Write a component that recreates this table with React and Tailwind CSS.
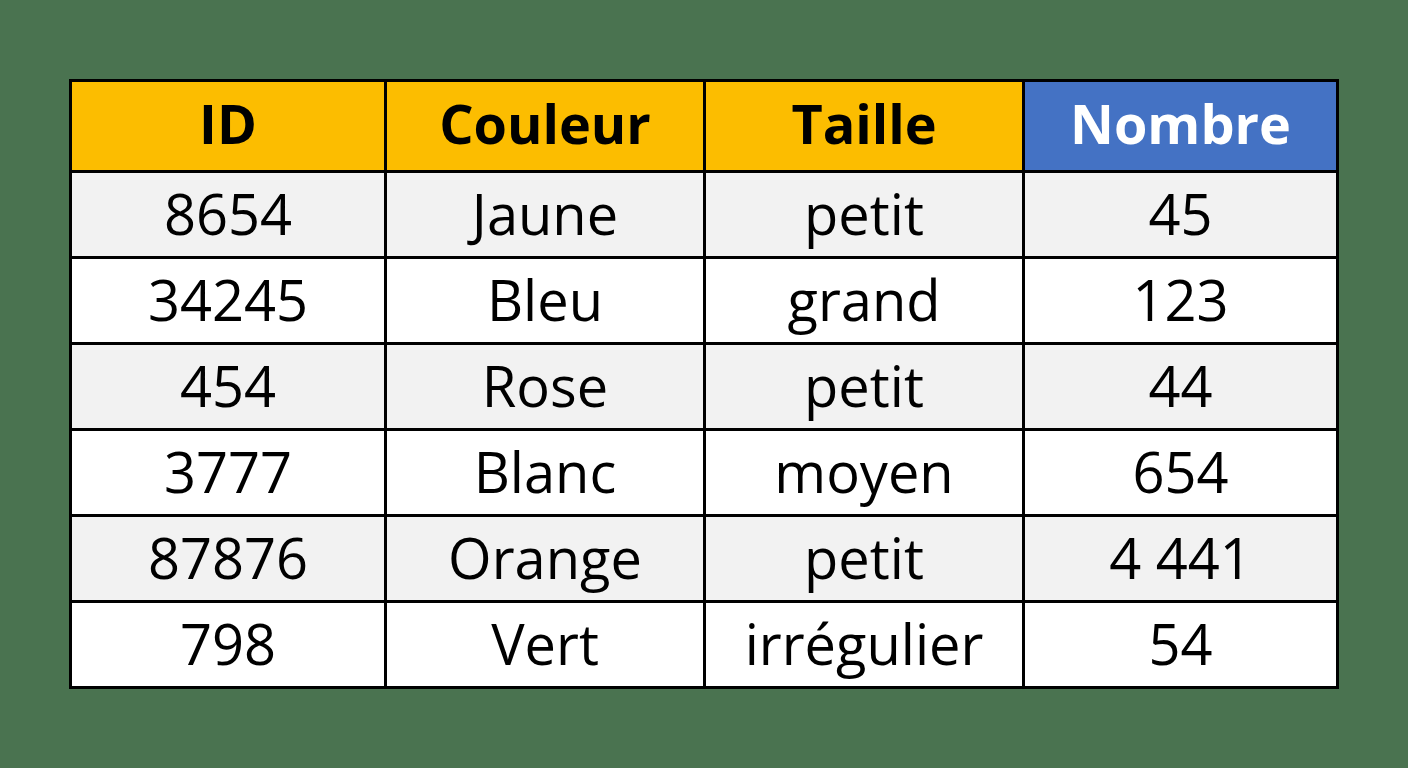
const headers = [
  { label: 'ID', bg: 'bg-[#fcbd00]', text: 'text-black' },
  { label: 'Couleur', bg: 'bg-[#fcbd00]', text: 'text-black' },
  { label: 'Taille', bg: 'bg-[#fcbd00]', text: 'text-black' },
  { label: 'Nombre', bg: 'bg-[#4472c4]', text: 'text-white' },
];

const rows = [
  ['8654', 'Jaune', 'petit', '45'],
  ['34245', 'Bleu', 'grand', '123'],
  ['454', 'Rose', 'petit', '44'],
  ['3777', 'Blanc', 'moyen', '654'],
  ['87876', 'Orange', 'petit', '4 441'],
  ['798', 'Vert', 'irrégulier', '54'],
];

export default function App() {
  return (
    <div className="min-h-screen w-full bg-[#4a7350] flex items-center justify-center font-['Open_Sans',sans-serif]">
      <table className="w-[1267px] table-fixed border-collapse border-[3px] border-black">
        <colgroup>
          <col className="w-[315px]" />
          <col className="w-[319px]" />
          <col className="w-[319px]" />
          <col className="w-[314px]" />
        </colgroup>
        <thead>
          <tr className="h-[91px]">
            {headers.map((h) => (
              <th key={h.label}
                className={`${h.bg} ${h.text} border-[3px] border-black text-[54px] font-bold leading-none text-center align-middle pb-[6px]`}>
                {h.label}
              </th>
            ))}
          </tr>
        </thead>
        <tbody>
          {rows.map((r, i) => (
            <tr key={r[0]} className={`h-[86px] ${i % 2 === 0 ? 'bg-[#f2f2f2]' : 'bg-white'}`}>
              {r.map((c, j) => (
                <td key={j} className="border-[3px] border-black text-[56px] font-medium text-black leading-none text-center align-middle pb-[4px]">
                  {c}
                </td>
              ))}
            </tr>
          ))}
        </tbody>
      </table>
    </div>
  );
}
